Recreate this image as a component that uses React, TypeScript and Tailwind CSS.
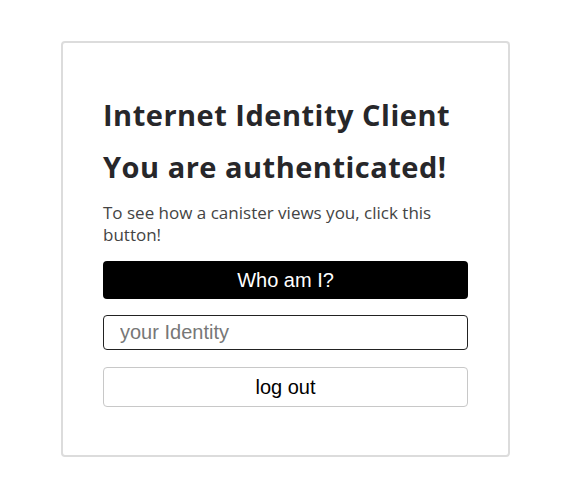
export default function App() {
  return (
    <div className="min-h-screen bg-white pt-[41px]">
      <div className="ml-[61px] w-[449px] rounded-[4px] border-2 border-[#dcdcdc] bg-white px-[40px] pt-[54px] pb-[48px]">
        <h1 className="font-['Open_Sans',sans-serif] text-[29px] font-bold leading-[36px] tracking-[0.5px] text-[#27272a]">
          Internet Identity Client
        </h1>
        <h2 className="mt-[16px] font-['Open_Sans',sans-serif] text-[29px] font-bold leading-[36px] tracking-[0.5px] text-[#27272a]">
          You are authenticated!
        </h2>
        <p className="mt-[17px] pr-[20px] font-['Open_Sans',sans-serif] text-[17px] leading-[22px] text-[#444]">
          To see how a canister views you, click this button!
        </p>
        <button className="mt-[15px] block h-[38px] w-full rounded-[4px] bg-black font-['Liberation_Sans',Arial,sans-serif] text-[20px] text-white">
          Who am I?
        </button>
        <input
          readOnly
          placeholder="your Identity"
          className="mt-[16px] block h-[35px] w-full rounded-[4px] border border-[#222] px-[16px] font-['Liberation_Sans',Arial,sans-serif] text-[20px] text-black placeholder:text-[#777] outline-none"
        />
        <button className="mt-[17px] block h-[40px] w-full rounded-[4px] border border-[#c8c8c8] bg-white font-['Liberation_Sans',Arial,sans-serif] text-[20px] text-black">
          log out
        </button>
      </div>
    </div>
  )
}
